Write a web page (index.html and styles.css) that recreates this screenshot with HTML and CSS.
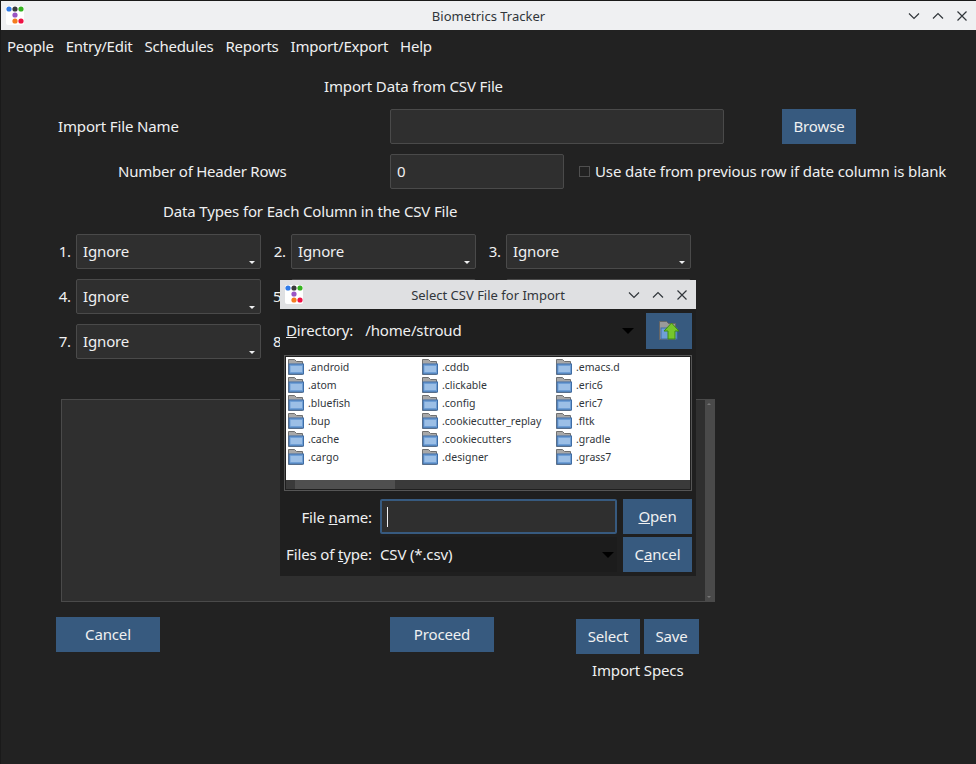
FILE: index.html
```html
<!DOCTYPE html>
<html lang="en">
<head>
  <meta charset="UTF-8" />
  <title>Biometrics Tracker</title>
  <link rel="stylesheet" href="styles.css">
</head>
<body>
  <svg class="defs" width="0" height="0">
    <symbol id="appIcon" viewBox="0 0 18 19">
      <rect x="0" y="0" width="18" height="19" rx="2" fill="#fff"/>
      <circle cx="3" cy="3" r="2.6" fill="#2f7be8"/>
      <circle cx="9" cy="3" r="2.6" fill="#3a3a3c"/>
      <circle cx="15" cy="3" r="2.6" fill="#35b31f"/>
      <circle cx="9" cy="9" r="2.6" fill="#9a55c4"/>
      <circle cx="9" cy="15" r="2.6" fill="#f57c1f"/>
      <circle cx="15" cy="15" r="2.6" fill="#ee1145"/>
    </symbol>
    <symbol id="folder" viewBox="0 0 16 16">
      <path d="M.5 .5h6l2 2h6v13H.5z" fill="#a8a8a8" stroke="#707070"/>
      <rect x="1" y="5" width="14.5" height="10" fill="#6f9fd6" stroke="#3f6da5"/>
      <rect x="2.5" y="7" width="11.5" height="6" fill="#9cbfe6"/>
    </symbol>
  </svg>

  <div class="window">
    <div class="titlebar">
      <svg class="app-icon"><use href="#appIcon"/></svg>
      <span class="title">Biometrics Tracker</span>
      <div class="win-buttons">
        <svg viewBox="0 0 12 12"><path d="M1 3.5l5 5 5-5"/></svg>
        <svg viewBox="0 0 12 12"><path d="M1 8.5l5-5 5 5"/></svg>
        <svg viewBox="0 0 12 12"><path d="M1.5 1.5l9 9M10.5 1.5l-9 9"/></svg>
      </div>
    </div>

    <div class="menubar">
      <span>People</span>
      <span>Entry/Edit</span>
      <span>Schedules</span>
      <span>Reports</span>
      <span>Import/Export</span>
      <span>Help</span>
    </div>

    <div class="form">
      <div class="heading">Import Data from CSV File</div>

      <div class="row row-file">
        <label class="file-label">Import File Name</label>
        <div class="field field-file"></div>
        <button class="btn btn-browse">Browse</button>
      </div>

      <div class="row row-header">
        <label class="header-label">Number of Header Rows</label>
        <div class="field field-header">0</div>
        <span class="checkbox"></span>
        <span class="check-label">Use date from previous row if date column is blank</span>
      </div>

      <div class="subheading">Data Types for Each Column in the CSV File</div>

      <div class="columns">
        <span class="num">1.</span><div class="combo">Ignore</div>
        <span class="num">2.</span><div class="combo">Ignore</div>
        <span class="num">3.</span><div class="combo">Ignore</div>
        <span class="num">4.</span><div class="combo">Ignore</div>
        <span class="num num-covered">5</span><div class="combo"></div>
        <span class="num"></span><div class="combo"></div>
        <span class="num">7.</span><div class="combo">Ignore</div>
        <span class="num num-covered">8</span><div class="combo"></div>
        <span class="num"></span><div class="combo"></div>
      </div>

      <div class="preview">
        <div class="vscroll">
          <span class="arrow-up"></span>
          <span class="arrow-down"></span>
        </div>
      </div>

      <div class="actions">
        <button class="btn btn-cancel">Cancel</button>
        <button class="btn btn-proceed">Proceed</button>
        <div class="specs">
          <div class="specs-buttons">
            <button class="btn btn-select">Select</button>
            <button class="btn btn-save">Save</button>
          </div>
          <div class="specs-label">Import Specs</div>
        </div>
      </div>
    </div>
  </div>

  <div class="dialog">
    <div class="titlebar dialog-titlebar">
      <svg class="app-icon"><use href="#appIcon"/></svg>
      <span class="title">Select CSV File for Import</span>
      <div class="win-buttons">
        <svg viewBox="0 0 12 12"><path d="M1 3.5l5 5 5-5"/></svg>
        <svg viewBox="0 0 12 12"><path d="M1 8.5l5-5 5 5"/></svg>
        <svg viewBox="0 0 12 12"><path d="M1.5 1.5l9 9M10.5 1.5l-9 9"/></svg>
      </div>
    </div>

    <div class="dir-row">
      <span class="dir-label"><u>D</u>irectory:</span>
      <span class="dir-path">/home/stroud</span>
      <span class="caret"></span>
      <button class="btn btn-up">
        <svg viewBox="0 0 22 22" width="22" height="22">
          <path d="M1.5 1.5h7l2 2h7v16h-16z" fill="#9a9a9a" stroke="#666"/>
          <rect x="3" y="8" width="16" height="11" fill="#6f9fd6" stroke="#3f6da5"/>
          <path d="M13.5 3L21 11h-4v8h-7v-8H6z" fill="#76c62c" stroke="#3f8a12"/>
        </svg>
      </button>
    </div>

    <div class="file-list">
      <div class="list-items">
        <div class="item"><svg><use href="#folder"/></svg>.android</div>
        <div class="item"><svg><use href="#folder"/></svg>.cddb</div>
        <div class="item"><svg><use href="#folder"/></svg>.emacs.d</div>
        <div class="item"><svg><use href="#folder"/></svg>.atom</div>
        <div class="item"><svg><use href="#folder"/></svg>.clickable</div>
        <div class="item"><svg><use href="#folder"/></svg>.eric6</div>
        <div class="item"><svg><use href="#folder"/></svg>.bluefish</div>
        <div class="item"><svg><use href="#folder"/></svg>.config</div>
        <div class="item"><svg><use href="#folder"/></svg>.eric7</div>
        <div class="item"><svg><use href="#folder"/></svg>.bup</div>
        <div class="item"><svg><use href="#folder"/></svg>.cookiecutter_replay</div>
        <div class="item"><svg><use href="#folder"/></svg>.fltk</div>
        <div class="item"><svg><use href="#folder"/></svg>.cache</div>
        <div class="item"><svg><use href="#folder"/></svg>.cookiecutters</div>
        <div class="item"><svg><use href="#folder"/></svg>.gradle</div>
        <div class="item"><svg><use href="#folder"/></svg>.cargo</div>
        <div class="item"><svg><use href="#folder"/></svg>.designer</div>
        <div class="item"><svg><use href="#folder"/></svg>.grass7</div>
      </div>
      <div class="hscroll">
        <span class="hthumb"></span>
      </div>
    </div>

    <div class="name-row">
      <span class="name-label">File <u>n</u>ame:</span>
      <div class="name-input"><span class="cursor"></span></div>
      <button class="btn btn-dialog"><u>O</u>pen</button>
    </div>

    <div class="type-row">
      <span class="name-label">Files of <u>t</u>ype:</span>
      <div class="type-combo"><span class="type-text">CSV (*.csv)</span><span class="caret"></span></div>
      <button class="btn btn-dialog">C<u>a</u>ncel</button>
    </div>
  </div>
</body>
</html>
```

FILE: styles.css
```css
html, body {
  margin: 0;
  padding: 0;
  height: 100%;
  background: #1a1a1a;
  overflow: hidden;
}

body {
  font-family: "Noto Sans", sans-serif;
  font-size: 15px;
  letter-spacing: -0.15px;
  color: #eff0f1;
}

.defs {
  display: block;
  height: 0;
}

button {
  font-family: inherit;
  font-size: inherit;
  letter-spacing: inherit;
  color: inherit;
  border: none;
  padding: 0;
}

.window {
  height: 763px;
  margin: 1px 0 0 1px;
  background: #222222;
  overflow: hidden;
}

.titlebar {
  display: flex;
  align-items: center;
  position: relative;
  height: 29px;
  background: #eff0f2;
  color: #31363b;
  font-size: 13px;
  letter-spacing: 0;
}

.app-icon {
  width: 18px;
  height: 19px;
  margin: 0 0 0 5px;
}

.title {
  position: absolute;
  left: 0;
  right: 0;
  text-align: center;
}

.win-buttons {
  display: flex;
  gap: 12px;
  margin-left: auto;
  margin-right: 8px;
}

.win-buttons svg {
  width: 12px;
  height: 12px;
  fill: none;
  stroke: #31363b;
  stroke-width: 1.2;
}

.menubar {
  display: flex;
  gap: 12px;
  height: 32px;
  align-items: center;
  padding-left: 6px;
  letter-spacing: -0.25px;
}

.form {
  position: relative;
}

.heading {
  margin: 14px 0 0 323px;
  line-height: 20px;
}

.row {
  display: flex;
  align-items: center;
  height: 35px;
}

.row-file {
  margin-top: 13px;
}

.row-header {
  margin-top: 10px;
}

.file-label, .header-label, .check-label {
  padding-bottom: 2px;
}

.file-label {
  margin-left: 57px;
  width: 332px;
}

.header-label {
  margin-left: 117px;
  width: 272px;
  letter-spacing: -0.24px;
}

.field {
  box-sizing: border-box;
  height: 35px;
  line-height: 33px;
  background: #2f2f2f;
  border: 1px solid #4a4a4a;
  border-radius: 2px;
  padding-left: 6px;
}

.field-file {
  width: 334px;
}

.field-header {
  width: 174px;
}

.btn {
  background: #375a7f;
  color: #eff0f1;
  height: 35px;
  padding-bottom: 2px;
}

.btn-browse {
  width: 74px;
  margin-left: 58px;
}

.checkbox {
  box-sizing: border-box;
  width: 11px;
  height: 11px;
  border: 1px solid #4f4f4f;
  margin: 0 5px 0 15px;
}

.check-label {
  letter-spacing: -0.12px;
}

.subheading {
  margin: 12px 0 0 162px;
  line-height: 20px;
}

.columns {
  display: grid;
  grid-template-columns: 75px 185px 30px 185px 30px 185px;
  grid-auto-rows: 35px;
  row-gap: 10px;
  margin-top: 13px;
  width: 690px;
}

.num {
  line-height: 35px;
  text-align: right;
  padding-right: 5px;
}

/* these two are half under the dialog */
.num-covered {
  text-align: left;
  padding: 0 0 0 12px;
}

.combo {
  position: relative;
  box-sizing: border-box;
  line-height: 33px;
  background: #2f2f2f;
  border: 1px solid #4a4a4a;
  border-radius: 2px;
  padding-left: 6px;
}

.combo::after {
  content: "";
  position: absolute;
  right: 5px;
  bottom: 4px;
  border-left: 3px solid transparent;
  border-right: 3px solid transparent;
  border-top: 3px solid #eff0f1;
}

.preview {
  position: relative;
  box-sizing: border-box;
  width: 654px;
  height: 203px;
  margin: 40px 0 0 60px;
  background: #2f2f2f;
  border: 1px solid #4a4a4a;
}

.vscroll {
  position: absolute;
  top: 0;
  right: 0;
  bottom: 0;
  width: 9px;
  background: #4a4a4a;
}

.arrow-up, .arrow-down {
  position: absolute;
  left: 2px;
  border-left: 2px solid transparent;
  border-right: 2px solid transparent;
}

.arrow-up {
  top: 3px;
  border-bottom: 2px solid #777;
}

.arrow-down {
  bottom: 3px;
  border-top: 2px solid #777;
}

.actions {
  display: flex;
  align-items: flex-start;
  margin: 15px 0 0 55px;
}

.btn-cancel {
  width: 104px;
}

.btn-proceed {
  width: 104px;
  margin-left: 230px;
}

.specs {
  margin: 2px 0 0 82px;
}

.specs-buttons {
  display: flex;
  gap: 4px;
}

.btn-select {
  width: 64px;
}

.btn-save {
  width: 55px;
}

.specs-label {
  margin-top: 6px;
  padding-left: 16px;
  line-height: 20px;
}

/* file dialog sits over the main window */
.dialog {
  position: absolute;
  left: 280px;
  top: 280px;
  width: 416px;
  height: 296px;
  background: #1f1f1f;
}

.dialog-titlebar {
  background: #dfe0e2;
}

.dir-row {
  display: flex;
  align-items: center;
  height: 36px;
  margin-top: 4px;
  padding: 0 4px 0 6px;
}

.dir-label, .dir-path {
  padding-bottom: 2px;
}

.dir-path {
  margin-left: 12px;
}

.caret {
  width: 0;
  height: 0;
  border-left: 6px solid transparent;
  border-right: 6px solid transparent;
  border-top: 6px solid #000;
}

.dir-row .caret {
  margin-left: auto;
  margin-right: 12px;
}

.btn-up {
  display: flex;
  align-items: center;
  justify-content: center;
  width: 46px;
  height: 36px;
  padding: 0;
}

.file-list {
  box-sizing: border-box;
  width: 408px;
  height: 136px;
  margin: 6px 0 0 4px;
  border: 1px solid #555;
  padding: 1px;
}

.list-items {
  display: grid;
  grid-template-columns: 134px 134px 134px;
  grid-auto-rows: 18px;
  height: 123px;
  box-sizing: border-box;
  padding: 1px 0 0 2px;
  background: #fff;
  color: #31363b;
  font-size: 10.5px;
  letter-spacing: 0;
}

.item {
  display: flex;
  align-items: center;
  gap: 4px;
}

.item svg {
  width: 16px;
  height: 16px;
}

.hscroll {
  height: 9px;
  background: #3a3a3a;
}

.hthumb {
  display: block;
  width: 100px;
  height: 9px;
  margin-left: 9px;
  background: #4f4f4f;
}

.name-row, .type-row {
  display: flex;
  align-items: center;
  height: 35px;
}

.name-row {
  margin-top: 8px;
}

.type-row {
  margin-top: 3px;
}

.type-row .name-label, .type-text {
  padding-bottom: 2px;
}

.name-label {
  box-sizing: border-box;
  width: 100px;
  text-align: right;
  padding-right: 8px;
}

.name-input {
  display: flex;
  align-items: center;
  box-sizing: border-box;
  width: 237px;
  height: 35px;
  background: #2f2f2f;
  border: 2px solid #375a7f;
  border-radius: 2px;
  padding-left: 5px;
}

.cursor {
  width: 1px;
  height: 20px;
  background: #eff0f1;
}

.type-combo {
  display: flex;
  align-items: center;
  justify-content: space-between;
  box-sizing: border-box;
  width: 237px;
  height: 35px;
  background: #1c1c1c;
  padding-right: 3px;
}

.btn-dialog {
  width: 69px;
  margin-left: 6px;
}
```
